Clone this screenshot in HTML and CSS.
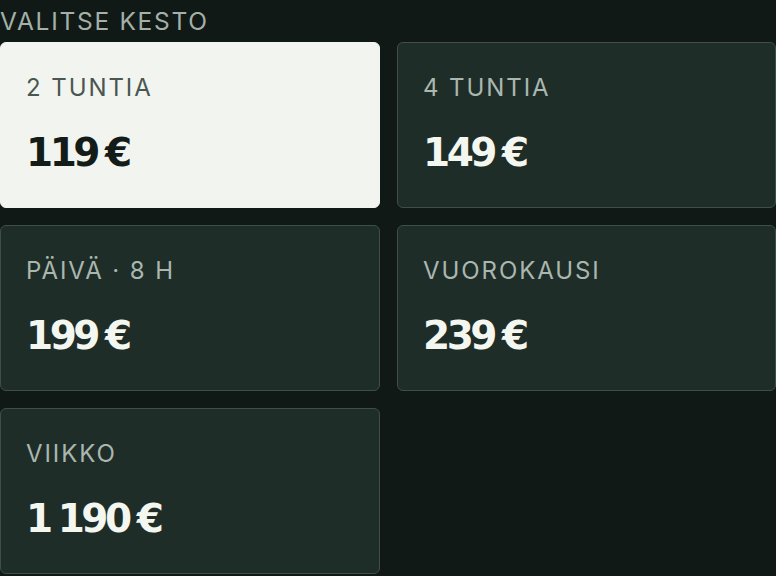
FILE: index.html
```html
<!DOCTYPE html>
<html lang="fi">
<head>
    <meta charset="UTF-8">
    <meta name="viewport" content="width=device-width, initial-scale=1.0">
    <title>Valitse kesto</title>
    <link rel="stylesheet" href="styles.css">
</head>
<body>
    <div class="duration">
        <h2 class="duration-title">Valitse kesto</h2>
        <div class="options">
            <button class="option selected">
                <span class="label">2 tuntia</span>
                <span class="price">119&nbsp;€</span>
            </button>
            <button class="option">
                <span class="label">4 tuntia</span>
                <span class="price">149&nbsp;€</span>
            </button>
            <button class="option">
                <span class="label">Päivä · 8 h</span>
                <span class="price">199&nbsp;€</span>
            </button>
            <button class="option">
                <span class="label">Vuorokausi</span>
                <span class="price">239&nbsp;€</span>
            </button>
            <button class="option">
                <span class="label">Viikko</span>
                <span class="price">1&nbsp;190&nbsp;€</span>
            </button>
        </div>
    </div>
</body>
</html>
```

FILE: styles.css
```css
*{
    padding: 0;
    margin: 0;
    box-sizing: border-box;
}
body{
    background: #111917;
    font-family: Inter, 'Noto Sans', sans-serif;
}
.duration{
    width: 776px;
}
.duration .duration-title{
    font-size: 24.5px;
    font-weight: 400;
    line-height: 30px;
    padding-top: 6px;
    margin-bottom: 6px;
    text-transform: uppercase;
    letter-spacing: 0.07em;
    color: #a3b1a9;
}
.duration .options{
    display: grid;
    grid-template-columns: 380px 379px;
    gap: 17px;
}
.duration .option{
    height: 166px;
    display: flex;
    flex-direction: column;
    align-items: flex-start;
    padding: 30px 25px 0;
    border: 1px solid #3e4f48;
    border-radius: 6px;
    background: #1f2d28;
    color: #f3f5ef;
    text-align: left;
    font-family: inherit;
    cursor: pointer;
}
.duration .option .label{
    font-size: 24px;
    line-height: 30px;
    text-transform: uppercase;
    letter-spacing: 0.08em;
    color: #aab7af;
}
.duration .option .price{
    margin-top: 26px;
    font-family: 'DejaVu Sans', sans-serif;
    font-weight: 700;
    font-size: 39px;
    line-height: 48px;
    letter-spacing: -3.5px;
    word-spacing: -2px;
    color: #f4f6f0;
}
.duration .option.selected{
    background: #f2f5ef;
    border-color: #f2f5ef;
}
.duration .option.selected .label{
    color: #4a5651;
}
.duration .option.selected .price{
    color: #141c19;
}
```
